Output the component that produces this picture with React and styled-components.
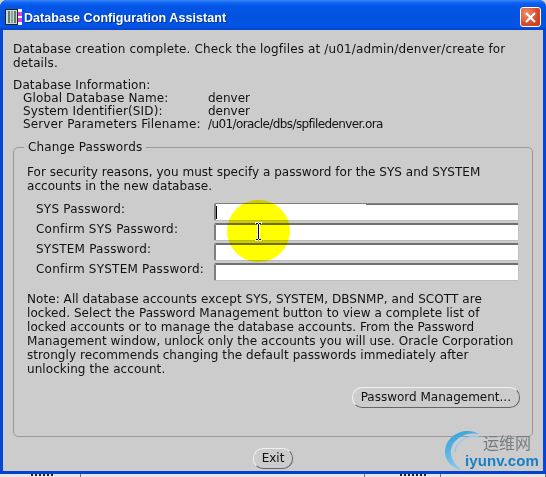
import React from "react";
import styled, { createGlobalStyle } from "styled-components";

const Global = createGlobalStyle`
  html, body { margin: 0; padding: 0; background: #d6d3ce; }
  #root { width: 546px; height: 477px; overflow: hidden; }
`;
const Screen = styled.div`
  position: relative; width: 546px; height: 477px; overflow: hidden;
  font-family: "DejaVu Sans", sans-serif; font-size: 12px; line-height: 13px; color: #111;
`;
const Win = styled.div`
  width: 546px; height: 474px; box-sizing: border-box; display: flex; flex-direction: column;
  background: #0347d8; border-radius: 7px 7px 0 0; border-bottom: 3px solid #0340d0;
`;
const TitleBar = styled.div`
  height: 30px; flex: none; box-sizing: border-box; display: flex; align-items: center; padding: 4px 5px 0 5px; gap: 2px;
  border-radius: 7px 7px 0 0;
  background: linear-gradient(180deg,#3d86f0 0%,#0a62f4 10%,#0355e6 22%,#0353e0 60%,#0355e8 85%,#0345c8 100%);
`;
const Title = styled.span`
  flex: 1; color: #fff; font: 700 12.5px/16px "Liberation Sans", sans-serif; letter-spacing: .06px; text-shadow: 1px 1px 0 #02319a; padding-top: 2px;
`;
const Close = styled.div`
  width: 21px; height: 20px; box-sizing: border-box; border: 1px solid #fff; border-radius: 3px;
  background: radial-gradient(circle at 30% 30%,#f0906c,#d8482a 60%,#c03a1c); display: flex; align-items: center; justify-content: center;
`;
const Body = styled.div`
  flex: 1; margin: 0 3px; background: #cccccc; padding: 12px 10px 0 10px; display: flex; flex-direction: column;
`;
const Para = styled.p`
  margin: 0; line-height: 14px; letter-spacing: ${p => p.$sp};
`;
const Info = styled.div`
  margin-top: 9px; letter-spacing: .14px;
`;
const InfoGrid = styled.div`
  display: grid; grid-template-columns: 185px 1fr; padding-left: 10px;
`;
const Value = styled.span`
  letter-spacing: ${p => (p.$tight ? "-0.6px" : "0")};
`;
const Group = styled.fieldset`
  margin: 10px 0 0 0; width: 520px; height: 296px; box-sizing: border-box;
  border: 1px solid #999; border-radius: 5px;
  padding: 11px 12px 0 13px; display: block; min-width: 0;
`;
const Legend = styled.legend`
  margin-left: -3px; padding: 0 4px; letter-spacing: .14px; line-height: 13px;
`;
const Form = styled.div`
  margin-top: 10px; padding-left: 9px; display: grid; grid-template-columns: 178px 305px; row-gap: 2px; align-items: start;
`;
const Label = styled.div`letter-spacing: .22px; white-space: nowrap;`;
const Field = styled.div`
  height: 18px; box-sizing: border-box; background: #fff; border-radius: 2px;
  border-top: ${p => (p.$partial ? "1px solid #808080" : "2px solid #707070")};
  border-left: 2px solid #808080; border-right: 1px solid #c4c4c4; border-bottom: 1px solid #bcbcbc;
  position: relative;
  ${p => p.$partial && `&::before { content: ""; position: absolute; top: 0; left: 150px; right: 0; height: 1px; background: #707070; }`}
`;
const Caret = styled.i`position: absolute; left: 0; top: 2px; width: 1px; height: 13px; background: #000;`;
const Note = styled.p`margin: 11px 0 0 0; line-height: 14px; letter-spacing: .06px; white-space: nowrap;`;
const Actions = styled.div`display: flex; justify-content: flex-end; margin: 11px 0 0 0;`;
const PillButton = styled.button`
  font: inherit; color: #111; letter-spacing: 0; height: 21px; padding: 0 8px; background: #cccccc; border-radius: 10px;
  border: 1px solid #f0f0f0; border-right-color: #666; border-bottom: 1px solid #666;
`;
const Footer = styled.div`display: flex; justify-content: center; margin: 11px 0 0 0;`;
const Spot = styled.div`
  position: absolute; left: 227px; top: 200px; width: 63px; height: 62px; border-radius: 50%; background: #ffff00; mix-blend-mode: multiply;
`;
const Cursor = styled.svg`position: absolute; left: 254px; top: 222px;`;
const Mark = styled.div`position: absolute; left: 443px; top: 429px; width: 103px; height: 44px;`;
const Cn = styled.span`
  position: absolute; left: 40px; top: 5px; font: 400 16px/16px "Noto Sans CJK SC", sans-serif; color: #757d82;
`;
const Url = styled.span`
  position: absolute; left: 22px; top: 24px; font: 700 15px/16px "Liberation Sans", sans-serif; color: #1580c8; letter-spacing: .1px;
`;
const Strip = styled.div`
  height: 3px; background: #e6e6e6; display: flex; overflow: hidden;
`;
const StripCell = styled.div`
  width: ${p => p.$w}px; flex: none; box-sizing: border-box; padding-left: ${p => p.$pad}px; border-right: 1px solid #777;
`;
const StripInk = styled.div`
  width: ${p => p.$w}px; height: 2px; background: repeating-linear-gradient(90deg,#222 0 2px,transparent 2px 4px);
`;

const DbIcon = () => (
  <svg width="17" height="16" viewBox="0 0 17 16" shapeRendering="crispEdges">
    <rect x="0" y="0" width="13" height="16" fill="#222" />
    <rect x="1" y="1" width="11" height="14" fill="#cfd6cf" />
    <rect x="3" y="2" width="2" height="12" fill="#5d7f6d" />
    <rect x="6" y="2" width="2" height="12" fill="#86a695" />
    <rect x="9" y="2" width="2" height="12" fill="#5d7f6d" />
    <rect x="13" y="0" width="4" height="16" fill="#fff" />
    <rect x="13" y="3" width="4" height="4" fill="#e040e0" />
    <rect x="13" y="9" width="4" height="4" fill="#e040e0" />
  </svg>
);

export default function App() {
  return (
    <Screen>
      <Global />
      <Win>
        <TitleBar>
          <DbIcon />
          <Title>Database Configuration Assistant</Title>
          <Close>
            <svg width="13" height="13" viewBox="0 0 13 13"><path d="M2 2 L11 11 M11 2 L2 11" stroke="#fff" strokeWidth="2.2" /></svg>
          </Close>
        </TitleBar>
        <Body>
          <Para $sp="0.14px">Database creation complete. Check the logfiles at /u01/admin/denver/create for details.</Para>
          <Info>
            <div>Database Information:</div>
            <InfoGrid>
              <span>Global Database Name:</span><Value>denver</Value>
              <span>System Identifier(SID):</span><Value>denver</Value>
              <span>Server Parameters Filename:</span><Value $tight>/u01/oracle/dbs/spfiledenver.ora</Value>
            </InfoGrid>
          </Info>
          <Group>
            <Legend>Change Passwords</Legend>
            <Para $sp="0.03px">For security reasons, you must specify a password for the SYS and SYSTEM accounts in the new database.</Para>
            <Form>
              <Label>SYS Password:</Label><Field $partial><Caret /></Field>
              <Label>Confirm SYS Password:</Label><Field />
              <Label>SYSTEM Password:</Label><Field />
              <Label>Confirm SYSTEM Password:</Label><Field />
            </Form>
            <Note>
              Note: All database accounts except SYS, SYSTEM, DBSNMP, and SCOTT are<br />
              locked. Select the Password Management button to view a complete list of<br />
              locked accounts or to manage the database accounts. From the Password<br />
              Management window, unlock only the accounts you will use. Oracle Corporation<br />
              strongly recommends changing the default passwords immediately after<br />
              unlocking the account.
            </Note>
            <Actions><PillButton>Password Management...</PillButton></Actions>
          </Group>
          <Footer><PillButton>Exit</PillButton></Footer>
        </Body>
      </Win>
      <Strip>
        <StripCell $w={81} $pad={31}><StripInk $w={24} /></StripCell>
        <StripCell $w={284} $pad={0} />
        <StripCell $w={76} $pad={35}><StripInk $w={28} /></StripCell>
        <StripCell $w={105} $pad={20} />
      </Strip>
      <Spot />
      <Cursor width="9" height="19" viewBox="0 0 9 19" shapeRendering="crispEdges">
        <path d="M1 0h3v1h1v-1h3v2h-2v15h2v2h-3v-1h-1v1h-3v-2h2v-15h-2z" fill="#fff" />
        <path d="M2 1h2v1h1v-1h2v1h-2v15h2v1h-2v-1h-1v1h-2v-1h2v-15h-2z" fill="#000" />
      </Cursor>
      <Mark>
        <svg width="42" height="44" viewBox="0 0 42 44" fill="none">
          <defs>
            <linearGradient id="arcFade" x1="0" y1="0" x2="0.4" y2="1">
              <stop offset="0" stopColor="#2a9cdc" />
              <stop offset="1" stopColor="#8fcdeb" />
            </linearGradient>
          </defs>
          <path d="M36 5 C22 -3 3 6 2 22 C1.5 32 9 39 20 42 C12 36 7 29 8 21 C9 11 22 2 36 5 Z" fill="url(#arcFade)" />
          <path d="M36 8 C26 5 13 12 12 23" stroke="#8ccbea" strokeWidth="1.4" />
        </svg>
        <Cn>运维网</Cn>
        <Url>iyunv.com</Url>
      </Mark>
    </Screen>
  );
}
